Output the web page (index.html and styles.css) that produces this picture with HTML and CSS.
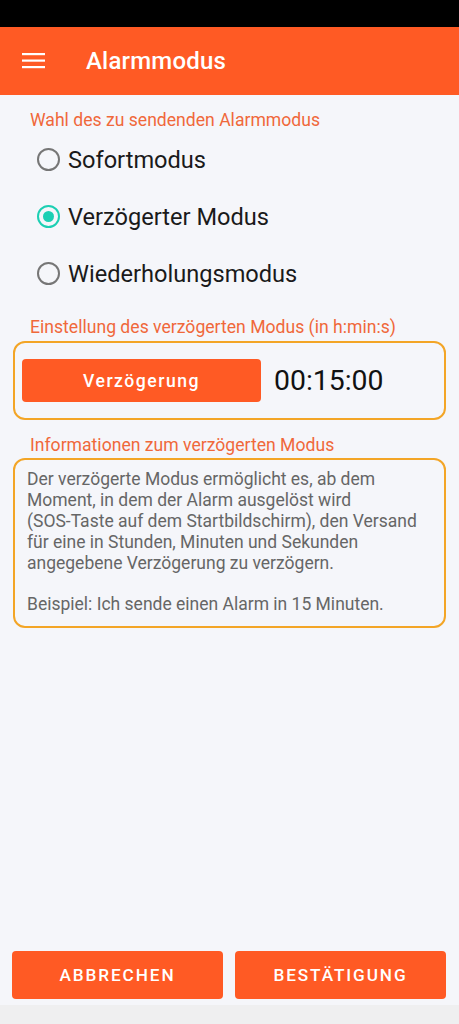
FILE: index.html
```html
<!DOCTYPE html>
<html lang="de">
<head>
<meta charset="utf-8">
<title>Alarmmodus</title>
<link rel="stylesheet" href="styles.css">
</head>
<body>
<div class="screen">
  <div class="statusbar"></div>
  <header class="appbar">
    <svg class="menu" width="24" height="18" viewBox="0 0 24 18">
      <rect x="0" y="2" width="23" height="2.2" fill="#fff"/>
      <rect x="0" y="8.5" width="23" height="2.2" fill="#fff"/>
      <rect x="0" y="15" width="23" height="2.2" fill="#fff"/>
    </svg>
    <h1 class="title">Alarmmodus</h1>
  </header>
  <main class="content">
    <div class="label label-first">Wahl des zu sendenden Alarmmodus</div>
    <div class="radios">
      <div class="radio-row"><span class="radio"></span><span class="radio-text">Sofortmodus</span></div>
      <div class="radio-row"><span class="radio checked"></span><span class="radio-text">Verzögerter Modus</span></div>
      <div class="radio-row"><span class="radio"></span><span class="radio-text">Wiederholungsmodus</span></div>
    </div>
    <div class="label">Einstellung des verzögerten Modus (in h:min:s)</div>
    <div class="box delay-box">
      <button class="btn delay-btn">Verzögerung</button>
      <span class="time">00:15:00</span>
    </div>
    <div class="label label-info">Informationen zum verzögerten Modus</div>
    <div class="box info-box">
      <p>Der verzögerte Modus ermöglicht es, ab dem Moment, in dem der Alarm ausgelöst wird<br>(SOS-Taste auf dem Startbildschirm), den Versand für eine in Stunden, Minuten und Sekunden angegebene Verzögerung zu verzögern.</p>
      <p class="example">Beispiel: Ich sende einen Alarm in 15 Minuten.</p>
    </div>
  </main>
  <footer class="actions">
    <button class="btn action-btn">ABBRECHEN</button>
    <button class="btn action-btn">BESTÄTIGUNG</button>
  </footer>
  <div class="navstrip"></div>
</div>
</body>
</html>
```
FILE: styles.css
```css
* { box-sizing: border-box; }
html, body { margin: 0; padding: 0; }
body {
  font-family: Roboto, "Noto Sans", "Liberation Sans", sans-serif;
  background: #f5f6fa;
}
.screen {
  width: 459px;
  height: 1024px;
  display: flex;
  flex-direction: column;
  background: #f5f6fa;
}
.statusbar { height: 27px; background: #000; flex: none; }
.appbar {
  height: 68px;
  flex: none;
  background: #ff5a24;
  display: flex;
  align-items: center;
  padding-left: 22px;
}
.menu { display: block; margin-top: -3px; }
.title {
  margin: 0 0 0 40px;
  color: #fff;
  font-size: 24px;
  line-height: 28px;
  font-weight: 500;
  letter-spacing: 0.2px;
}
.content {
  flex: 1;
  padding: 0 13px;
}
.label {
  color: #f0683a;
  font-size: 17.6px;
  line-height: 20px;
  padding-left: 17px;
  margin-bottom: 4px;
}
.label-first { margin-top: 15px; margin-bottom: 1px; }
.label-info { margin-bottom: 3px; }
.radios { display: flex; flex-direction: column; margin-bottom: 15px; }
.radio-row {
  height: 57px;
  display: flex;
  align-items: center;
  padding-left: 24px;
  gap: 8px;
}
.radio {
  width: 23px;
  height: 23px;
  border-radius: 50%;
  border: 2px solid #767676;
  flex: none;
  display: flex;
  align-items: center;
  justify-content: center;
}
.radio.checked { border-color: #1ccfb3; }
.radio.checked::after {
  content: "";
  width: 11px;
  height: 11px;
  border-radius: 50%;
  background: #1ccfb3;
}
.radio-text {
  font-size: 23.6px;
  line-height: 28px;
  color: #1a1a1a;
}
.box {
  border: 2px solid #f3a526;
  border-radius: 12px;
}
.delay-box {
  height: 79px;
  display: flex;
  align-items: center;
  padding-left: 7px;
  margin-bottom: 15px;
}
.btn {
  border: none;
  background: #ff5a24;
  color: #fff;
  font-family: Roboto, "Noto Sans", "Liberation Sans", sans-serif;
  font-weight: 500;
  border-radius: 4px;
  cursor: pointer;
}
.delay-btn {
  width: 239px;
  height: 43px;
  font-size: 17.6px;
  letter-spacing: 1.5px;
}
.time {
  margin-left: 13px;
  font-size: 28.4px;
  color: #111;
}
.info-box {
  padding: 9px 12px 11px;
  color: #666;
  font-size: 17.5px;
  line-height: 21px;
}
.info-box p { margin: 0; }
.info-box .example { margin-top: 20px; }
.actions {
  flex: none;
  display: flex;
  gap: 12px;
  padding: 0 13px 6px 12px;
}
.action-btn {
  flex: 1;
  height: 48px;
  font-size: 17.2px;
  letter-spacing: 1.9px;
}
.navstrip { height: 19px; background: #efeff0; flex: none; }
```
